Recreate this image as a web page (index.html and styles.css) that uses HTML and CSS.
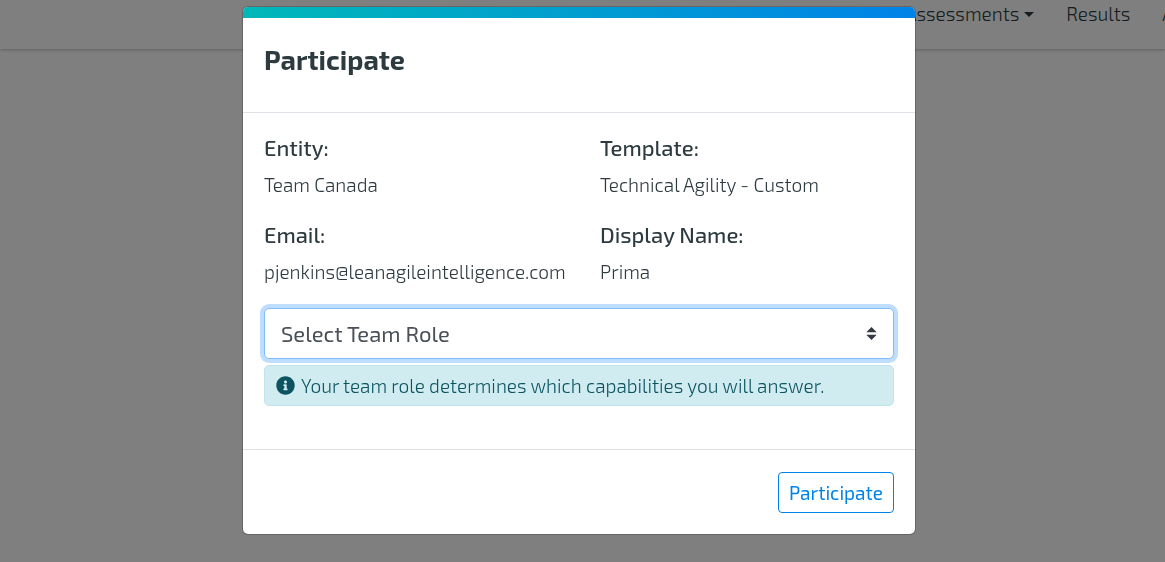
FILE: index.html
```html
<!DOCTYPE html>
<html lang="en">
<head>
<meta charset="utf-8">
<meta name="viewport" content="width=device-width, initial-scale=1">
<title>Participate</title>
<link rel="stylesheet" href="styles.css">
</head>
<body>
<header class="topbar">
  <nav class="nav" aria-label="Main">
    <a class="nav-link" href="#">Assessments<svg class="caret" viewBox="0 0 10 5" aria-hidden="true"><path d="M0 0h10L5 5z"/></svg></a>
    <a class="nav-link" href="#">Results</a>
    <a class="nav-link" href="#">A</a>
  </nav>
</header>
<div class="backdrop">
  <form class="modal" role="dialog" aria-modal="true" aria-labelledby="title">
    <div class="accent"></div>
    <div class="modal-header"><h1 class="title" id="title">Participate</h1></div>
    <div class="modal-body">
      <dl class="details">
        <div><dt>Entity:</dt><dd>Team Canada</dd></div>
        <div><dt>Template:</dt><dd>Technical Agility - Custom</dd></div>
        <div><dt>Email:</dt><dd>pjenkins@leanagileintelligence.com</dd></div>
        <div><dt>Display Name:</dt><dd>Prima</dd></div>
      </dl>
      <div class="select-wrap">
        <select class="role-select" aria-label="Team role">
          <option>Select Team Role</option>
        </select>
        <svg class="select-arrows" viewBox="0 0 4 5" aria-hidden="true"><path d="M2 0L0 2h4zm0 5L0 3h4z"/></svg>
      </div>
      <div class="hint">
        <svg class="info" viewBox="0 0 512 512" aria-hidden="true"><path d="M256 8C119 8 8 119 8 256s111 248 248 248 248-111 248-248S393 8 256 8zm0 110c23.200 0 42 18.800 42 42s-18.800 42-42 42-42-18.800-42-42 18.800-42 42-42zm56 254c0 6.600-5.400 12-12 12h-88c-6.600 0-12-5.400-12-12v-24c0-6.600 5.400-12 12-12h12v-64h-12c-6.600 0-12-5.400-12-12v-24c0-6.600 5.400-12 12-12h64c6.600 0 12 5.400 12 12v100h12c6.600 0 12 5.400 12 12z"/></svg>
        <span>Your team role determines which capabilities you will answer.</span>
      </div>
    </div>
    <div class="modal-footer"><button class="button" type="button">Participate</button></div>
  </form>
</div>
</body>
</html>
```
FILE: styles.css
```css
* { box-sizing: border-box; }

body {
  margin: 0;
  min-height: 100vh;
  overflow: hidden;
  background: #fff;
  color: #2d3b41;
  font: 300 19px/28px "Exo 2", "Noto Sans", sans-serif;
}

.topbar {
  height: 49px;
  box-shadow: 0 1px 3px rgba(0, 0, 0, .25);
}

.nav {
  display: flex;
  justify-content: flex-end;
  gap: 32px;
  margin-right: -9px;
}

.nav-link {
  display: flex;
  align-items: center;
  gap: 5px;
  color: #2d3b41;
  text-decoration: none;
}

.caret {
  width: 10px;
  height: 5px;
  fill: currentColor;
}

.backdrop {
  position: fixed;
  inset: 0;
  padding: 6px 7px 0 0;
  background: rgba(0, 0, 0, .5);
}

.modal {
  width: 100%;
  max-width: 674px;
  margin: 0 auto;
  overflow: hidden;
  background: #fff;
  background-clip: padding-box;
  border: 1px solid rgba(0, 0, 0, .2);
  border-radius: 6px;
}

.accent {
  height: 11px;
  background: linear-gradient(90deg, #00b8b8, #0083e8);
}

.modal-header {
  padding: 23px 21px 35px;
  border-bottom: 1px solid #dee2e6;
}

.title {
  margin: 0;
  font-size: 27px;
  line-height: 36px;
  font-weight: 700;
}

.modal-body { padding: 20px 21px 43px; }

.details {
  display: grid;
  grid-template-columns: 1fr 1fr;
  column-gap: 42px;
  row-gap: 21px;
  margin: 0 0 22px;
}

.details > div { min-width: 0; }

dt {
  margin-bottom: 10px;
  font-size: 22px;
  font-weight: 500;
}

dd { margin: 0; white-space: nowrap; }

.select-wrap {
  display: grid;
  align-items: center;
}

.role-select,
.select-arrows { grid-area: 1 / 1; }

.role-select {
  width: 100%;
  height: 51px;
  padding: 0 40px 2px 16px;
  appearance: none;
  background: #fff;
  border: 1px solid #80bdff;
  border-radius: 5px;
  box-shadow: 0 0 0 4px #bfdeff;
  color: #495057;
  font: inherit;
  font-weight: 400;
  font-size: 22px;
}

.select-arrows {
  justify-self: end;
  width: 11px;
  height: 13px;
  margin-right: 17px;
  fill: #343a40;
  pointer-events: none;
}

.hint {
  display: flex;
  align-items: center;
  gap: 6px;
  margin-top: 6px;
  padding: 6px 11px;
  background: #d1ecf1;
  border: 1px solid #bee5eb;
  border-radius: 5px;
  color: #0c5460;
  line-height: 27px;
}

.info {
  flex: none;
  width: 19px;
  height: 19px;
  fill: currentColor;
}

.modal-footer {
  display: flex;
  justify-content: flex-end;
  padding: 22px 21px 21px;
  border-top: 1px solid #dee2e6;
}

.button {
  padding: 6px 10px;
  background: #fff;
  border: 1px solid #0083e8;
  border-radius: 4px;
  color: #0083e8;
  font: inherit;
  font-weight: 400;
  line-height: 27px;
}
```
